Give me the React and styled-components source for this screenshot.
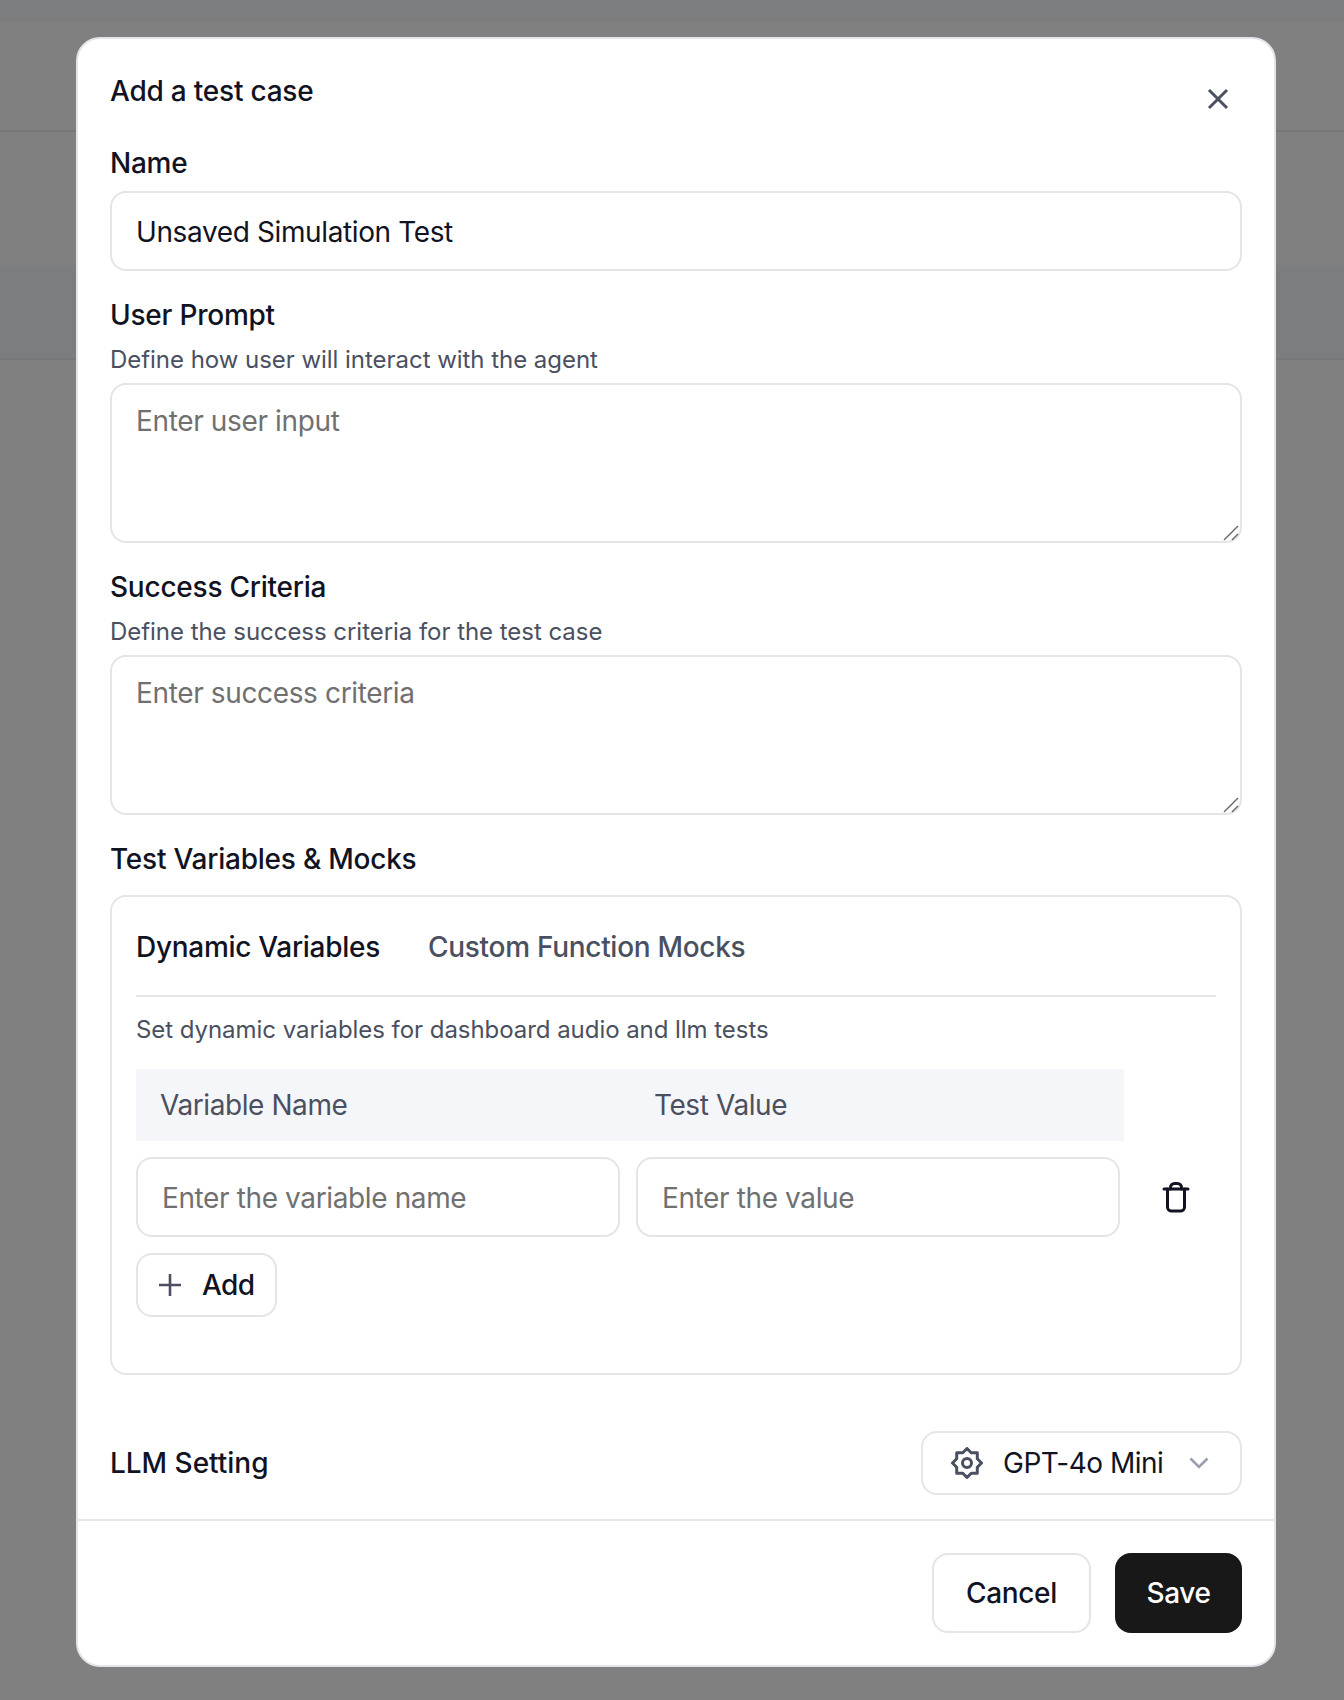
import React from 'react'
import styled, { createGlobalStyle } from 'styled-components'

const GlobalStyle = createGlobalStyle`
  * { box-sizing: border-box; }
  html, body { margin: 0; padding: 0; }
  body {
    background: #808080;
    font-family: Inter, "Liberation Sans", sans-serif;
    color: #111322;
  }
`

const Page = styled.div`
  position: relative;
  height: 1700px;
  overflow: hidden;
`

const BackTop = styled.div`
  height: 22px;
  background: #7c7d7f;
`

const BackHeader = styled.div`
  height: 110px;
  border-bottom: 2px solid #757678;
`

const BackGap = styled.div`
  height: 133px;
`

const BackBand = styled.div`
  height: 95px;
  background: #7c7d7f;
  border-bottom: 2px solid #757678;
`

const Overlay = styled.div`
  position: absolute;
  inset: 0;
  display: flex;
  justify-content: center;
  align-items: flex-start;
  padding: 37px 68px 0 76px;
`

const Modal = styled.div`
  width: 1200px;
  height: 1630px;
  background: #fff;
  border: 2px solid #e4e4ea;
  border-radius: 24px;
  display: flex;
  flex-direction: column;
`

const Body = styled.div`
  flex: 1;
  padding: 32px 32px 0;
  display: flex;
  flex-direction: column;
`

const TitleRow = styled.div`
  display: flex;
  justify-content: space-between;
  align-items: flex-start;
  height: 74px;
`

const Title = styled.h2`
  margin: 2px 0 0;
  font-size: 28px;
  line-height: 36px;
  font-weight: 500;
  letter-spacing: -0.22px;
`

const CloseButton = styled.button`
  border: 0;
  background: none;
  padding: 0;
  margin: 12px 8px 0 0;
  width: 32px;
  height: 32px;
  color: #4a5060;
  display: flex;
`

const Field = styled.div`
  display: flex;
  flex-direction: column;
  margin-bottom: ${(p) => p.$gap || 0}px;
`

const Label = styled.label`
  font-size: 28px;
  line-height: 36px;
  font-weight: 500;
  letter-spacing: -0.23px;
  padding-bottom: ${(p) => p.$pb || 0}px;
`

const Hint = styled.div`
  font-size: 24px;
  line-height: 32px;
  color: #4a5060;
  letter-spacing: -0.04px;
  margin-bottom: 7px;
`

const TextInput = styled.input`
  width: 100%;
  height: 80px;
  border: 2px solid #e5e5e8;
  border-radius: 16px;
  padding: 2px 24px 0;
  font: 400 28px Inter, sans-serif;
  letter-spacing: -0.38px;
  color: #111322;
  background: #fff;
  outline: none;
  &::placeholder { color: #707070; opacity: 1; }
`

const AreaWrap = styled.div`
  position: relative;
  height: 160px;
`

const TextArea = styled.textarea`
  display: block;
  width: 100%;
  height: 160px;
  border: 2px solid #e5e5e8;
  border-radius: 16px;
  padding: 20px 24px;
  font: 400 28px/32px Inter, sans-serif;
  letter-spacing: -0.36px;
  color: #111322;
  outline: none;
  resize: none;
  &::placeholder { color: #707070; opacity: 1; }
`

const Grip = styled.svg`
  position: absolute;
  right: 3px;
  bottom: 2px;
`

const Card = styled.div`
  height: 480px;
  border: 2px solid #e5e5ea;
  border-radius: 16px;
  padding: 24px;
`

const Tabs = styled.div`
  display: flex;
  gap: 48px;
  height: 76px;
  border-bottom: 2px solid #e5e5ea;
  padding-top: 8px;
`

const Tab = styled.div`
  font-size: 28px;
  line-height: 36px;
  font-weight: 500;
  letter-spacing: -0.29px;
  color: ${(p) => (p.$active ? '#111322' : '#4a5060')};
`

const CardHint = styled.div`
  font-size: 24px;
  line-height: 32px;
  color: #4a5060;
  letter-spacing: -0.05px;
  margin: 17px 0 23px;
`

const HeadRow = styled.div`
  display: grid;
  grid-template-columns: 494px 1fr;
  align-items: center;
  width: 988px;
  height: 72px;
  padding-left: 24px;
  background: #f5f6fa;
  font-size: 28px;
  letter-spacing: -0.42px;
  color: #4a5060;
`

const InputRow = styled.div`
  display: grid;
  grid-template-columns: 484px 484px 1fr;
  column-gap: 16px;
  margin-top: 16px;
  align-items: center;
`

const TrashButton = styled.button`
  border: 0;
  background: none;
  padding: 0;
  justify-self: center;
  display: flex;
  color: #111322;
`

const AddButton = styled.button`
  margin-top: 16px;
  width: 141px;
  height: 64px;
  border: 2px solid #e5e5e8;
  border-radius: 16px;
  background: #fff;
  display: flex;
  align-items: center;
  gap: 20px;
  padding: 0 0 0 20px;
  font: 500 28px Inter, sans-serif;
  letter-spacing: -0.6px;
  color: #111322;
  svg { color: #4a5060; }
`

const SettingRow = styled.div`
  display: flex;
  justify-content: space-between;
  align-items: center;
  margin-top: 56px;
`

const SettingLabel = styled.div`
  font-size: 28px;
  line-height: 36px;
  font-weight: 500;
  letter-spacing: -0.02px;
`

const ModelSelect = styled.div`
  width: 321px;
  height: 64px;
  border: 2px solid #e5e5ea;
  border-radius: 16px;
  display: flex;
  align-items: center;
  padding-left: 28px;
  font-size: 28px;
  letter-spacing: -0.5px;
  color: #111322;
`

const ModelName = styled.span`
  margin: 0 26px 0 20px;
`

const Footer = styled.div`
  border-top: 2px solid #e5e5ea;
  height: 146px;
  padding: 32px 32px 0;
  display: flex;
  justify-content: flex-end;
  gap: 24px;
`

const FooterButton = styled.button`
  height: 80px;
  width: ${(p) => (p.$primary ? 127 : 159)}px;
  border-radius: 16px;
  border: 2px solid ${(p) => (p.$primary ? '#181818' : '#e5e5e8')};
  background: ${(p) => (p.$primary ? '#181818' : '#fff')};
  color: ${(p) => (p.$primary ? '#fff' : '#111322')};
  font: 500 28px Inter, sans-serif;
  letter-spacing: -0.35px;
`

const CloseIcon = () => (
  <svg width="32" height="32" viewBox="0 0 32 32" fill="none" stroke="currentColor" strokeWidth="3">
    <path d="M7 7l18 18M25 7L7 25" />
  </svg>
)

const TrashIcon = () => (
  <svg width="32" height="32" viewBox="0 0 32 32" fill="none" stroke="currentColor" strokeWidth="3" strokeLinejoin="round" strokeLinecap="round">
    <path d="M4 8h24" />
    <path d="M7.5 8v18a4 4 0 0 0 4 4h9a4 4 0 0 0 4-4V8" />
    <path d="M10.5 8V6.5a4 4 0 0 1 4-4h3a4 4 0 0 1 4 4V8" />
  </svg>
)

const PlusIcon = () => (
  <svg width="24" height="24" viewBox="0 0 24 24" fill="none" stroke="currentColor" strokeWidth="2.6">
    <path d="M12 1v22M1 12h22" />
  </svg>
)

const GearIcon = () => (
  <svg width="32" height="32" viewBox="0 0 32 32" fill="none" stroke="#4a5060" strokeWidth="3" strokeLinejoin="round">
    <path d="M16 1.5l4.2 4.2h6.1v6.1l4.2 4.2-4.2 4.2v6.1h-6.1L16 30.5l-4.2-4.2H5.7v-6.1L1.5 16l4.2-4.2V5.7h6.1z" />
    <circle cx="16" cy="16" r="4.5" />
  </svg>
)

const ChevronIcon = () => (
  <svg width="20" height="12" viewBox="0 0 20 12" fill="none" stroke="#98a0ae" strokeWidth="2.6">
    <path d="M1.5 1.5L10 10l8.5-8.5" />
  </svg>
)

const GripIcon = () => (
  <Grip width="16" height="16" viewBox="0 0 16 16" fill="none" stroke="#666" strokeWidth="1.4">
    <path d="M1 15L15 1M9 15l6-6" />
  </Grip>
)

const PromptArea = ({ placeholder }) => (
  <AreaWrap>
    <TextArea placeholder={placeholder} />
    <GripIcon />
  </AreaWrap>
)

const App = () => (
  <Page>
    <GlobalStyle />
    <BackTop />
    <BackHeader />
    <BackGap />
    <BackBand />
    <Overlay>
      <Modal>
        <Body>
          <TitleRow>
            <Title>Add a test case</Title>
            <CloseButton aria-label="Close"><CloseIcon /></CloseButton>
          </TitleRow>
          <Field $gap={26}>
            <Label $pb={10}>Name</Label>
            <TextInput defaultValue="Unsaved Simulation Test" />
          </Field>
          <Field $gap={26}>
            <Label $pb={11}>User Prompt</Label>
            <Hint>Define how user will interact with the agent</Hint>
            <PromptArea placeholder="Enter user input" />
          </Field>
          <Field $gap={26}>
            <Label $pb={11}>Success Criteria</Label>
            <Hint>Define the success criteria for the test case</Hint>
            <PromptArea placeholder="Enter success criteria" />
          </Field>
          <Field>
            <Label $pb={18}>Test Variables &amp; Mocks</Label>
            <Card>
              <Tabs>
                <Tab $active>Dynamic Variables</Tab>
                <Tab>Custom Function Mocks</Tab>
              </Tabs>
              <CardHint>Set dynamic variables for dashboard audio and llm tests</CardHint>
              <HeadRow>
                <span>Variable Name</span>
                <span>Test Value</span>
              </HeadRow>
              <InputRow>
                <TextInput placeholder="Enter the variable name" />
                <TextInput placeholder="Enter the value" />
                <TrashButton aria-label="Delete"><TrashIcon /></TrashButton>
              </InputRow>
              <AddButton><PlusIcon />Add</AddButton>
            </Card>
          </Field>
          <SettingRow>
            <SettingLabel>LLM Setting</SettingLabel>
            <ModelSelect>
              <GearIcon />
              <ModelName>GPT-4o Mini</ModelName>
              <ChevronIcon />
            </ModelSelect>
          </SettingRow>
        </Body>
        <Footer>
          <FooterButton>Cancel</FooterButton>
          <FooterButton $primary>Save</FooterButton>
        </Footer>
      </Modal>
    </Overlay>
  </Page>
)

export default App
